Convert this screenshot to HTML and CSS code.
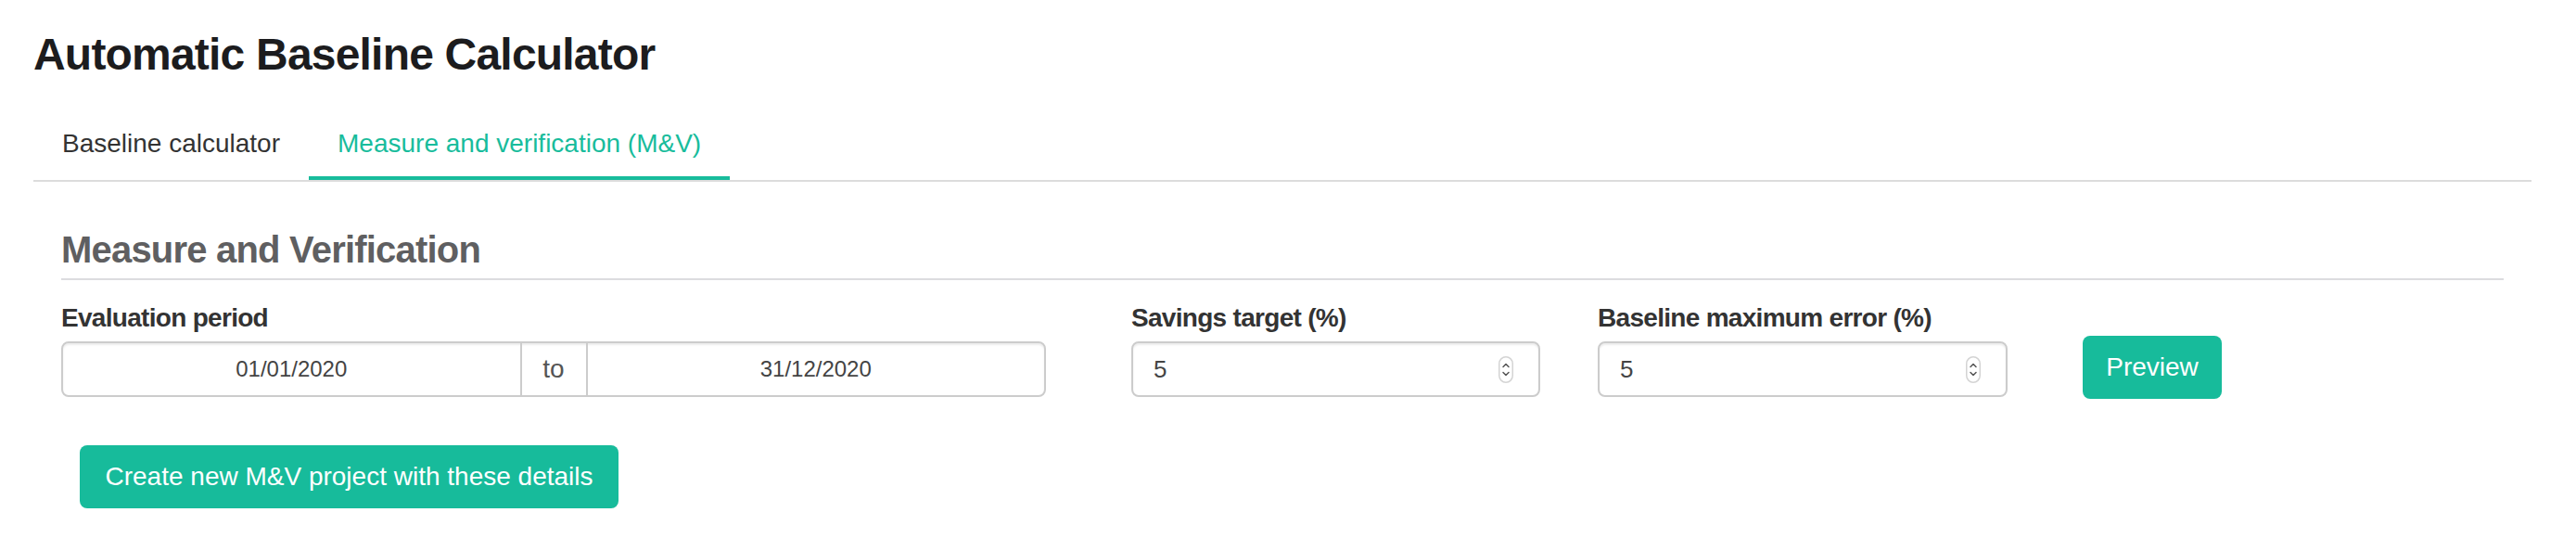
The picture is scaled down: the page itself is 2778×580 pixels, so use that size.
FILE: index.html
```html
<!DOCTYPE html>
<html lang="en">
<head>
<meta charset="utf-8">
<title>Automatic Baseline Calculator</title>
<link rel="stylesheet" href="styles.css">
</head>
<body>
<div class="page">
  <h1 class="title">Automatic Baseline Calculator</h1>
  <nav class="tabs">
    <a class="tab">Baseline calculator</a>
    <a class="tab active">Measure and verification (M&amp;V)</a>
  </nav>
  <section class="panel">
    <h2 class="section-title">Measure and Verification</h2>
    <div class="form-row">
      <div class="field field-period">
        <label class="label">Evaluation period</label>
        <div class="daterange">
          <input class="date-input" type="text" value="01/01/2020">
          <span class="addon">to</span>
          <input class="date-input" type="text" value="31/12/2020">
        </div>
      </div>
      <div class="field field-savings">
        <label class="label">Savings target (%)</label>
        <div class="number-box">
          <input class="number-input" type="text" value="5">
          <svg class="spinner" width="16" height="29" viewBox="0 0 16 29"><rect x="0.75" y="0.75" width="14.5" height="27.5" rx="7.25" fill="#fff" stroke="#d4d4d4" stroke-width="1.5"/><path d="M5 11.5 L8 8.5 L11 11.5" fill="none" stroke="#555" stroke-width="1.5" stroke-linecap="round" stroke-linejoin="round"/><path d="M5 17.5 L8 20.5 L11 17.5" fill="none" stroke="#555" stroke-width="1.5" stroke-linecap="round" stroke-linejoin="round"/></svg>
        </div>
      </div>
      <div class="field field-error">
        <label class="label">Baseline maximum error (%)</label>
        <div class="number-box">
          <input class="number-input" type="text" value="5">
          <svg class="spinner" width="16" height="29" viewBox="0 0 16 29"><rect x="0.75" y="0.75" width="14.5" height="27.5" rx="7.25" fill="#fff" stroke="#d4d4d4" stroke-width="1.5"/><path d="M5 11.5 L8 8.5 L11 11.5" fill="none" stroke="#555" stroke-width="1.5" stroke-linecap="round" stroke-linejoin="round"/><path d="M5 17.5 L8 20.5 L11 17.5" fill="none" stroke="#555" stroke-width="1.5" stroke-linecap="round" stroke-linejoin="round"/></svg>
        </div>
      </div>
      <div class="field field-preview">
        <button class="btn btn-preview">Preview</button>
      </div>
    </div>
    <button class="btn btn-create">Create new M&amp;V project with these details</button>
  </section>
</div>
</body>
</html>
```
FILE: styles.css
```css
* { box-sizing: border-box; }

html, body {
  margin: 0;
  padding: 0;
  background: #fff;
}

body {
  font-family: "Liberation Sans", Arial, Helvetica, sans-serif;
  color: #333;
}

.page {
  padding: 0 48px 0 36px;
}

.title {
  margin: 33px 0 0;
  font-size: 48px;
  line-height: 52px;
  font-weight: bold;
  letter-spacing: -0.8px;
  color: #1c1c1e;
}

.tabs {
  display: flex;
  margin-top: 35px;
  border-bottom: 2px solid #dcdcdc;
}

.tab {
  display: block;
  padding: 15px 31px 15px 31px;
  font-size: 28px;
  line-height: 40px;
  color: #333;
  border-bottom: 4px solid transparent;
  text-decoration: none;
}

.tab.active {
  color: #18bc9c;
  border-bottom-color: #18bc9c;
}

.panel {
  padding: 0 30px;
}

.section-title {
  margin: 51px 0 0;
  padding-bottom: 9px;
  font-size: 40px;
  line-height: 44px;
  font-weight: bold;
  letter-spacing: -0.8px;
  color: #5f5f61;
  border-bottom: 2px solid #dcdcdf;
}

.form-row {
  display: flex;
  align-items: flex-start;
  margin-top: 21px;
}

.field {
  display: flex;
  flex-direction: column;
}

.label {
  display: block;
  font-size: 28px;
  line-height: 40px;
  font-weight: bold;
  letter-spacing: -0.7px;
  color: #333;
  margin-bottom: 5px;
}

.field-period { width: 1062px; margin-right: 92px; }
.field-savings { width: 441px; margin-right: 62px; }
.field-error { width: 442px; margin-right: 81px; }
.field-preview { padding-top: 39px; }

.daterange {
  display: flex;
  height: 60px;
  border: 2px solid #cccccc;
  border-radius: 8px;
  box-shadow: inset 0 2px 2px rgba(0, 0, 0, 0.075);
  overflow: hidden;
}

.date-input {
  flex: 1;
  min-width: 0;
  border: 0;
  background: transparent;
  font-family: "Liberation Sans", Arial, Helvetica, sans-serif;
  font-size: 24px;
  color: #444;
  text-align: center;
  padding: 0;
  outline: none;
}

.addon {
  width: 73px;
  flex: 0 0 73px;
  display: flex;
  align-items: center;
  justify-content: center;
  border-left: 2px solid #cccccc;
  border-right: 2px solid #cccccc;
  font-size: 28px;
  color: #555;
}

.number-box {
  display: flex;
  align-items: center;
  height: 60px;
  border: 2px solid #cccccc;
  border-radius: 8px;
  box-shadow: inset 0 2px 2px rgba(0, 0, 0, 0.075);
  padding: 0 27px 0 22px;
}

.number-input {
  flex: 1;
  min-width: 0;
  border: 0;
  background: transparent;
  font-family: "Liberation Sans", Arial, Helvetica, sans-serif;
  font-size: 26px;
  color: #444;
  padding: 0;
  outline: none;
}

.spinner {
  display: block;
  flex: 0 0 auto;
}

.btn {
  display: block;
  border: 0;
  border-radius: 8px;
  background: #17bb9b;
  color: #fff;
  font-family: "Liberation Sans", Arial, Helvetica, sans-serif;
  cursor: pointer;
}

.btn-preview {
  width: 150px;
  height: 68px;
  padding: 0;
  font-size: 28px;
}

.btn-create {
  margin: 50px 0 0 20px;
  width: 581px;
  height: 68px;
  padding: 0;
  font-size: 28px;
}
```
